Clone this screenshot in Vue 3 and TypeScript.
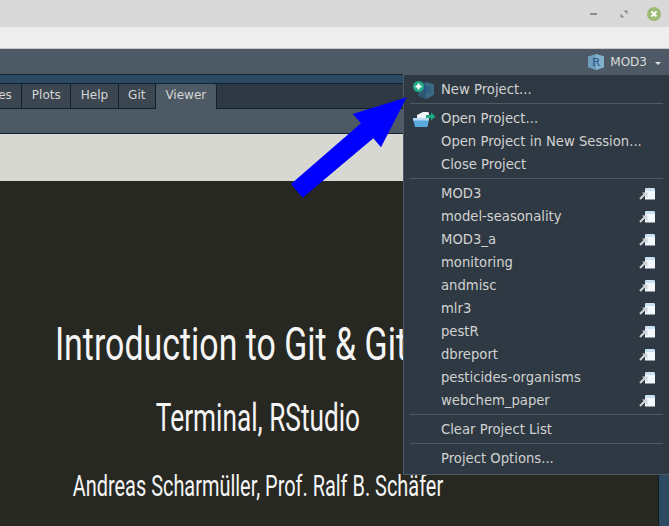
<script setup lang="ts">
const tabs: { label: string; active?: boolean }[] = [
  { label: 'Files' },
  { label: 'Plots' },
  { label: 'Help' },
  { label: 'Git' },
  { label: 'Viewer', active: true },
]
const recent: string[] = [
  'MOD3',
  'model-seasonality',
  'MOD3_a',
  'monitoring',
  'andmisc',
  'mlr3',
  'pestR',
  'dbreport',
  'pesticides-organisms',
  'webchem_paper',
]
</script>

<template>
  <div class="window">
    <header class="titlebar">
      <svg class="win-icon" width="14" height="14" viewBox="0 0 14 14">
        <rect x="3" y="6" width="7" height="2" fill="#8c8c8c" />
      </svg>
      <svg class="win-icon" width="14" height="14" viewBox="0 0 14 14">
        <path d="M6.500 3.500h4v4z M3.500 6.500l4 4h-4z" fill="#8c8c8c" />
      </svg>
      <svg class="win-icon" width="14" height="14" viewBox="0 0 14 14">
        <circle cx="7" cy="7" r="7" fill="#9dbb72" />
        <path d="M4.500 4.500l5 5M9.500 4.500l-5 5" stroke="#fff" stroke-width="1.800" />
      </svg>
    </header>
    <div class="menubar"></div>
    <div class="toolbar">
      <svg width="18" height="18" viewBox="0 0 18 18">
        <path d="M9 1l8 2.600v10.600L9 17l-8-2.800V3.600z" fill="#6d9fbc" />
        <path d="M9 1l8 2.600v10.600L9 17z" fill="#82b0ca" />
        <text x="9" y="13" class="r-letter">R</text>
      </svg>
      <span class="project-name">MOD3</span>
      <span class="caret"></span>
    </div>
    <div class="band"></div>
    <nav class="tabs">
      <div v-for="tab in tabs" :key="tab.label" class="tab" :class="{ active: tab.active }">{{ tab.label }}</div>
    </nav>
    <div class="subtoolbar"></div>
    <div class="stage">
      <main class="viewer">
        <div class="paper"></div>
        <section class="slide">
          <h1>Introduction to Git &amp; GitHub</h1>
          <h2>Terminal, RStudio</h2>
          <h3>Andreas Scharmüller, Prof. Ralf B. Schäfer</h3>
        </section>
      </main>
      <aside class="edge"></aside>
    </div>

    <div class="menu">
      <div class="row">
        <svg class="row-icon" width="24" height="22" viewBox="0 0 24 22">
          <path d="M13 4l8 2.400v10.400L13 21l-8-3.200V6.400z" fill="#2f5a70" />
          <path d="M13 4l8 2.400v10.400L13 21z" fill="#3b6b82" />
          <text x="14" y="15" class="r-small">R</text>
          <circle cx="5.500" cy="8.500" r="5.500" fill="#1faa85" />
          <path d="M5.500 5.500v6M2.500 8.500h6" stroke="#fff" stroke-width="2" />
        </svg>
        New Project...
      </div>
      <div class="sep"></div>
      <div class="row">
        <svg class="row-icon" width="24" height="22" viewBox="0 0 24 22">
          <path d="M4 8l6-3h5l1 1v5H4z" fill="#eef4f8" />
          <path d="M0 12h16l-1.500 8H2z" fill="#5aa9dc" />
          <path d="M0 11h16v2.500H0z" fill="#b5dcf3" />
          <path d="M13 8h5V5.500l4.500 4-4.500 4V11h-5z" fill="#1faa85" />
        </svg>
        Open Project...
      </div>
      <div class="row">Open Project in New Session...</div>
      <div class="row">Close Project</div>
      <div class="sep"></div>
      <div v-for="name in recent" :key="name" class="row">
        {{ name }}
        <svg class="pin" width="16" height="12" viewBox="0 0 16 12">
          <path d="M6 1.500Q6 0 7.500 0H14q2 0 2 2v9.500H6z" fill="#f3f8fd" />
          <path d="M7 0h7q2 0 2 2v1H6V1z" fill="#c9e1f5" />
          <path d="M1 11l5-5" stroke="#cfd4d8" stroke-width="2.200" />
          <path d="M3 4.500h5.500V10z" fill="#cfd4d8" />
        </svg>
      </div>
      <div class="sep"></div>
      <div class="row">Clear Project List</div>
      <div class="sep"></div>
      <div class="row">Project Options...</div>
    </div>

    <svg class="arrow" width="669" height="526" viewBox="0 0 669 526">
      <polygon points="406.700,97.300 352.700,114 361,123.300 291,184 302.700,197.700 373.300,138.300 381,147.300" fill="#0000ff" />
    </svg>
  </div>
</template>

<style scoped>
.window {
  position: relative;
  width: 669px;
  height: 526px;
  overflow: hidden;
  display: flex;
  flex-direction: column;
  font-family: "DejaVu Sans", sans-serif;
  background: #282823;
}
.titlebar {
  height: 27px;
  flex: none;
  background: #d9d9d9;
  display: flex;
  align-items: center;
  justify-content: flex-end;
  gap: 16px;
  padding-right: 8px;
  box-sizing: border-box;
}
.win-icon {
  display: block;
}
.menubar {
  height: 21px;
  flex: none;
  background: #eeeeee;
  border-bottom: 1px solid #c9c9c9;
}
.toolbar {
  height: 25px;
  flex: none;
  background: #4d5a65;
  display: flex;
  align-items: center;
  justify-content: flex-end;
  padding-right: 8px;
  color: #dcdcdc;
  font-size: 12px;
}
.project-name {
  margin-left: 5px;
}
.caret {
  width: 0;
  height: 0;
  margin-left: 8px;
  margin-top: 3px;
  border-left: 3px solid transparent;
  border-right: 3px solid transparent;
  border-top: 3px solid #e0e0e0;
}
.r-letter {
  font-family: "DejaVu Serif", serif;
  font-size: 11px;
  font-weight: 400;
  fill: #1d4f86;
  text-anchor: middle;
}
.r-small {
  font-family: "DejaVu Serif", serif;
  font-size: 10px;
  font-weight: 400;
  fill: #1c4f8a;
  text-anchor: middle;
}
.band {
  height: 8px;
  flex: none;
  background: #2d4a63;
  border-top: 1px solid #0f2233;
  border-bottom: 1px solid #0f2233;
}
.tabs {
  height: 24px;
  flex: none;
  display: flex;
  background: #2e3943;
  border-bottom: 1px solid #0f2233;
}
.tab {
  box-sizing: border-box;
  background: #3b4650;
  color: #d6d6d6;
  font-size: 12px;
  line-height: 23px;
  padding: 0 9.500px;
  border-right: 1px solid #0f2233;
  border-radius: 2px 2px 0 0;
}
.tab:first-child {
  margin-left: -24px;
}
.tab.active {
  background: #4d5a65;
  height: 25px;
}
.subtoolbar {
  height: 24px;
  flex: none;
  background: #4d5a65;
  border-bottom: 1px solid #0f2233;
}
.stage {
  flex: 1;
  display: flex;
  min-height: 0;
}
.viewer {
  flex: 1;
  min-width: 0;
  display: flex;
  flex-direction: column;
}
.paper {
  height: 47px;
  flex: none;
  background: #d7d8d2;
}
.slide {
  flex: 1;
  width: 515px;
  display: flex;
  flex-direction: column;
  align-items: center;
  color: #f5f5f5;
  font-family: "Roboto", sans-serif;
  white-space: nowrap;
}
.slide h1 {
  flex: none;
  margin: 134px 0 0 8px;
  font-size: 46px;
  line-height: 58px;
  font-weight: 400;
  transform: scaleX(0.737);
}
.slide h2 {
  flex: none;
  margin: 21px 0 0;
  font-size: 38px;
  line-height: 48px;
  font-weight: 400;
  transform: scaleX(0.69);
}
.slide h3 {
  flex: none;
  margin: 25px 0 0;
  font-size: 30px;
  line-height: 38px;
  font-weight: 400;
  transform: scaleX(0.664);
}
.edge {
  width: 10px;
  flex: none;
  background: #2d4a63;
  border-left: 1px solid #0f1a22;
}
.menu {
  position: absolute;
  left: 403px;
  top: 74px;
  width: 266px;
  box-sizing: border-box;
  background: #2e3943;
  border: 1px solid #4d5a65;
  border-right: none;
  padding: 3px 0 4px;
  color: #d2d2d2;
  font-size: 13.200px;
}
.row {
  position: relative;
  height: 23px;
  line-height: 24px;
  padding-left: 37px;
  white-space: nowrap;
}
.row-icon {
  position: absolute;
  left: 9px;
  top: 0;
}
.pin {
  position: absolute;
  left: 235px;
  top: 6px;
}
.sep {
  height: 1px;
  margin: 2px 6px 3px;
  background: #4d5a65;
}
.arrow {
  position: absolute;
  left: 0;
  top: 0;
  pointer-events: none;
}
</style>
